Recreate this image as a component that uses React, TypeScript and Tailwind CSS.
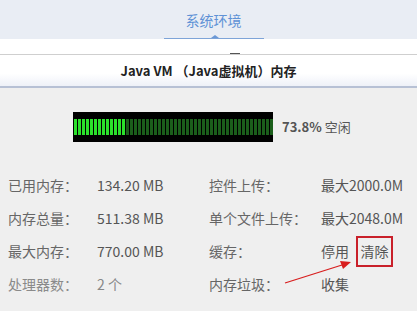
const font = { fontFamily: '"Noto Sans CJK SC", "Open Sans", sans-serif' };

const used = 13;
const total = 50;

function MemBar() {
  return (
    <div className="flex h-[30px] w-[200px] items-center bg-black pl-[1px]">
      <div className="flex h-[16px] gap-[1px]">
        {Array.from({ length: total }).map((_, i) => (
          <div
            key={i}
            className={i < used ? "w-[3px] bg-[#2be02b]" : "w-[3px] bg-[#1b5e1b]"}
          />
        ))}
      </div>
    </div>
  );
}

const left = [
  ["已用内存：", "134.20 MB"],
  ["内存总量：", "511.38 MB"],
  ["最大内存：", "770.00 MB"],
  ["处理器数：", "2 个"],
];

export default function App() {
  return (
    <div
      className="relative h-[311px] w-[417px] overflow-hidden bg-[#efefef] text-[14px] text-[#666]"
      style={font}
    >
      {/* tab strip */}
      <div className="flex h-[39px] justify-center bg-[#e9edf4]">
        <div className="relative ml-[10px] flex w-[100px] flex-col items-center justify-end">
          <span className="mb-[7px] text-[14px] text-[#5f92d6]">系统环境</span>
          <div className="h-[1px] w-full bg-[#7ea4d8]" />
          <div className="absolute bottom-[1px] left-[47px] h-0 w-0 border-x-[4px] border-b-[3px] border-x-transparent border-b-[#6b98d6]" />
        </div>
      </div>
      <div className="flex h-[15px] items-end bg-white pl-[230px]">
        <div className="h-[1px] w-[10px] bg-[#555]" />
      </div>
      {/* title */}
      <div className="flex h-[34px] items-center justify-center border-t border-b-2 border-t-[#cfcfcf] border-b-[#b7c1d5] bg-gradient-to-b from-white from-60% to-[#eef1f8]">
        <span className="text-[13px] font-bold text-[#222]">Java VM （Java虚拟机）内存</span>
      </div>

      <div className="mt-[24px] flex items-center pl-[73px]">
        <MemBar />
        <span className="ml-[9px] text-[13px] text-[#555]">
          <b>73.8%</b> 空闲
        </span>
      </div>

      <div className="mt-[27px] flex">
        <div className="w-[209px] pl-[8px]">
          {left.map(([k, v], i) => (
            <div key={k} className="flex h-[33px] items-center">
              <span className={i === 3 ? "w-[89px] text-[#8a8a8a]" : "w-[89px]"}>{k}</span>
              <span className={i === 3 ? "text-[#888]" : "text-[#555]"}>{v}</span>
            </div>
          ))}
        </div>
        <div className="flex-1">
          <div className="flex h-[33px] items-center">
            <span className="w-[112px]">控件上传：</span>
            <span className="text-[#555]">最大2000.0M</span>
          </div>
          <div className="flex h-[33px] items-center">
            <span className="w-[112px]">单个文件上传：</span>
            <span className="text-[#555]">最大2048.0M</span>
          </div>
          <div className="flex h-[33px] items-center">
            <span className="w-[112px]">缓存：</span>
            <span className="text-[#555]">停用</span>
            <span className="ml-[7px] flex h-[31px] w-[37px] items-center justify-center border-2 border-[#c9202a] text-[#555]">
              清除
            </span>
          </div>
          <div className="flex h-[33px] items-center">
            <span className="w-[112px]">内存垃圾：</span>
            <span className="text-[#555]">收集</span>
          </div>
        </div>
      </div>

      {/* annotation arrow */}
      <svg className="absolute left-0 top-0" width="417" height="311">
        <line x1="285" y1="283" x2="342" y2="265" stroke="#d81e1e" strokeWidth="1.3" />
        <polygon points="351,262 340,261 343,269" fill="#d81e1e" />
      </svg>
    </div>
  );
}
